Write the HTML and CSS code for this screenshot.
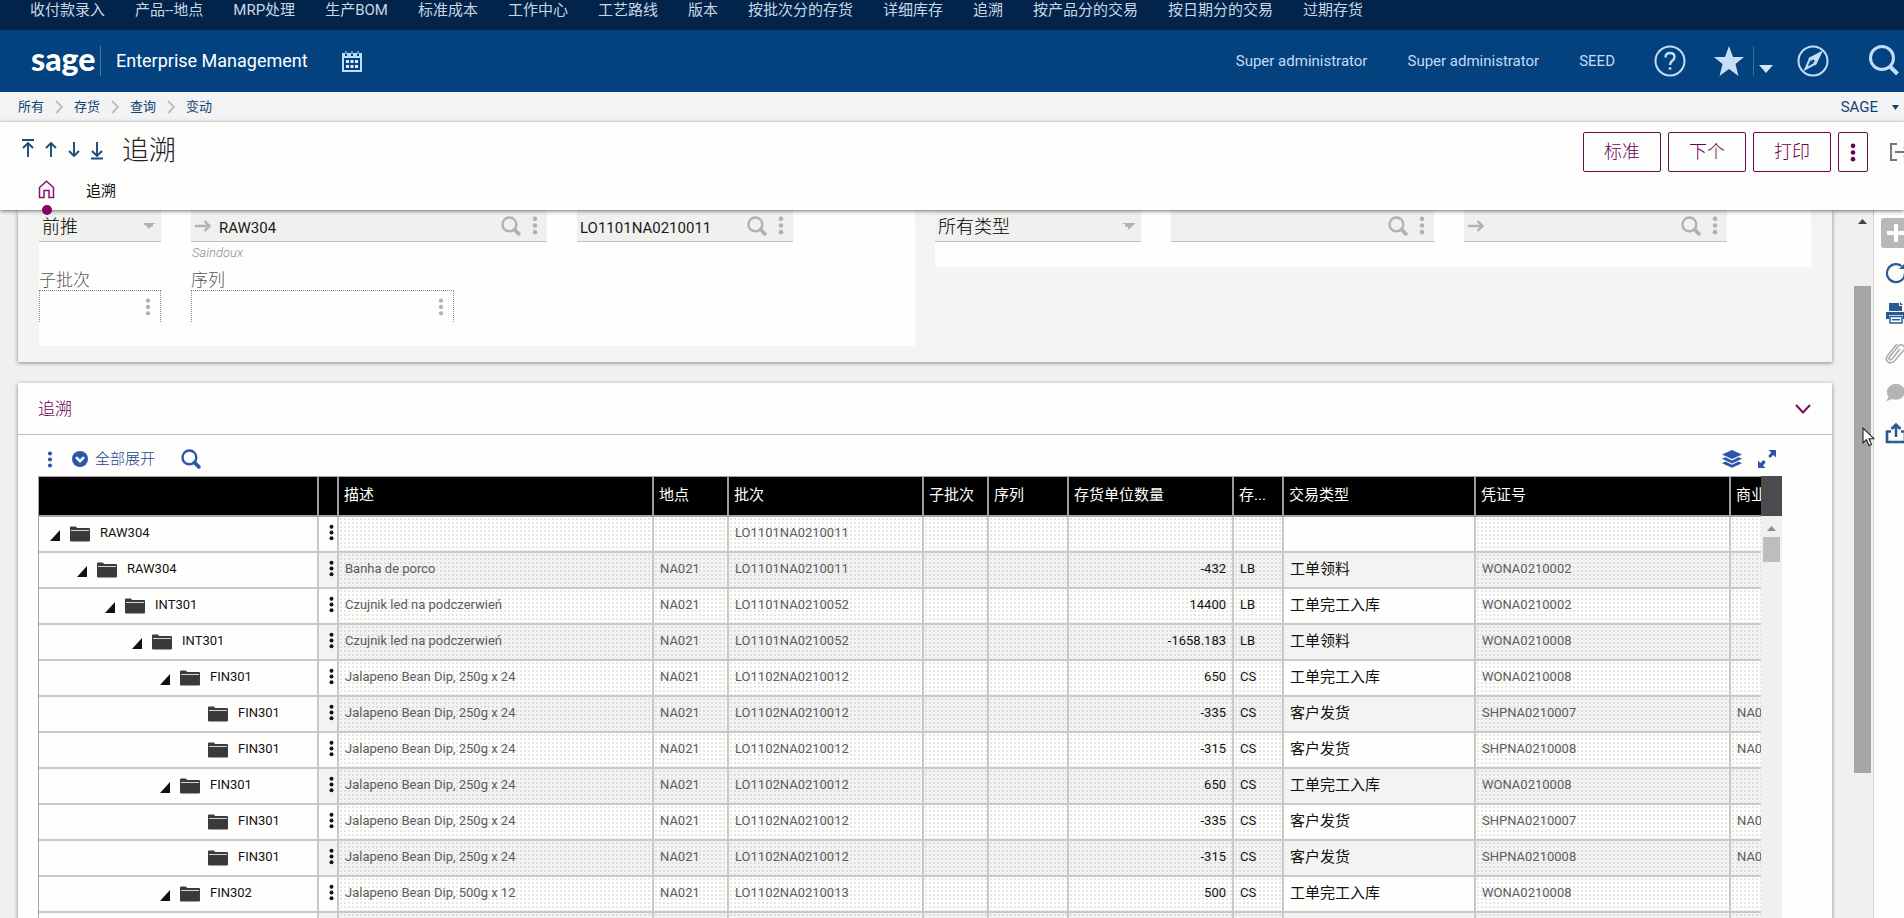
FILE: index.html
```html
<!DOCTYPE html>
<html lang="zh-CN">
<head>
<meta charset="utf-8">
<title>追溯 - Sage Enterprise Management</title>
<link rel="stylesheet" href="styles.css">
</head>
<body>
<svg class="sprite" aria-hidden="true">
  <symbol id="dots" viewBox="0 0 6 20"><circle cx="3" cy="3" r="2.4"/><circle cx="3" cy="10" r="2.4"/><circle cx="3" cy="17" r="2.4"/></symbol>
  <symbol id="lens" viewBox="0 0 20 20"><circle cx="8.4" cy="8.4" r="6.9" fill="none" stroke="currentColor" stroke-width="2.4"/><path d="M13.5 13.5 17.8 17.8" fill="none" stroke="currentColor" stroke-width="3.8" stroke-linecap="round"/></symbol>
  <symbol id="go" viewBox="0 0 18 12"><path d="M1 6H15M10.500 1 15.500 6 10.500 11" fill="none" stroke="currentColor" stroke-width="2.400"/></symbol>
  <symbol id="folder" viewBox="0 0 20 16"><path d="M0 14.500V1.500Q0 .5 1 .5H5.500Q6.500 .5 7 2H19Q20 2 20 3V14.500Q20 15.500 19 15.500H1Q0 15.500 0 14.500Z" fill="#3a3a3a"/><path d="M1 4.500H19" stroke="#d5d5d5" stroke-width="1"/></symbol>
  <symbol id="tri" viewBox="0 0 10 11"><path d="M10 0V11H0Z"/></symbol>
  <symbol id="sep" viewBox="0 0 8 14"><path d="M1 1 7 7 1 13" fill="none" stroke="currentColor" stroke-width="1.900"/></symbol>
</svg>
<nav class="shortcuts" aria-label="快捷方式">
  <a href="#">收付款录入</a><a href="#">产品--地点</a><a href="#">MRP处理</a><a href="#">生产BOM</a><a href="#">标准成本</a><a href="#">工作中心</a><a href="#">工艺路线</a><a href="#">版本</a><a href="#">按批次分的存货</a><a href="#">详细库存</a><a href="#">追溯</a><a href="#">按产品分的交易</a><a href="#">按日期分的交易</a><a href="#">过期存货</a>
</nav>
<header class="banner">
  <span class="logo">sage</span>
  <span class="product">Enterprise Management</span>
  <button class="plain calendar" aria-label="日历"><svg width="20" height="21" viewBox="0 0 20 21"><path d="M0 2H3V5H5V2H9V5H11V2H15V5H17V2H20V21H0ZM2 7V19H18V7Z" fill-rule="evenodd" fill="#bcdcff"/><path d="M4 0V3M10 0V3M16 0V3" stroke="#bcdcff" stroke-width="1.200"/><path d="M4 9h3v3H4zM8.500 9h3v3h-3zM13 9h3v3h-3zM4 14h3v3H4zM8.500 14h3v3h-3zM13 14h3v3h-3z" fill="#dcecff"/></svg></button>
  <span class="grow"></span>
  <a class="user" href="#">Super administrator</a>
  <a class="user" href="#">Super administrator</a>
  <a class="user endpoint" href="#">SEED</a>
  <button class="plain help" aria-label="帮助"><svg width="32" height="32" viewBox="0 0 32 32" fill="none" stroke="#c4dcf6" stroke-width="2"><circle cx="16" cy="16" r="14.500"/><path d="M11.500 12.500Q11.500 8 16 8Q20.500 8 20.500 12Q20.500 14 18 16Q16 17.600 16 20" stroke-width="2.400"/><path d="M14.700 22.300h2.600v2.400h-2.600z" fill="#c4dcf6" stroke="none"/></svg></button>
  <button class="plain star" aria-label="收藏"><svg width="30" height="30" viewBox="0 0 30 30"><path d="M15 0 19 11H30L21.500 18 24.500 30 15 23 5.500 30 8.500 18 0 11H11Z" fill="#c9ddf5"/></svg></button>
  <button class="plain more" aria-label="收藏列表"><svg width="14" height="8" viewBox="0 0 14 8"><path d="M0 0H14L7 8Z" fill="#d4e5f8"/></svg></button>
  <button class="plain compass" aria-label="导航"><svg width="32" height="32" viewBox="0 0 32 32" fill="none" stroke="#c4dcf6" stroke-width="2"><circle cx="16" cy="16" r="14.500"/><path d="M23.500 8 18.500 18.500 8.500 24 13 13.500Z" stroke-width="2"/><path d="M23.500 8 18.500 18.500 13 13.500Z" fill="#c4dcf6"/><circle cx="16" cy="16" r="1.500" fill="#03417f" stroke="none"/></svg></button>
  <button class="plain find" aria-label="搜索"><svg width="32" height="32" viewBox="0 0 32 32" fill="none" stroke="#c4dcf6"><circle cx="14" cy="13" r="11.500" stroke-width="3"/><path d="M22 21.500 29.500 29" stroke-width="4"/></svg></button>
</header>
<div class="trail">
  <nav aria-label="路径"><a href="#">所有</a><svg width="8" height="14"><use href="#sep"/></svg><a href="#">存货</a><svg width="8" height="14"><use href="#sep"/></svg><a href="#">查询</a><svg width="8" height="14"><use href="#sep"/></svg><a href="#">变动</a></nav>
  <button class="plain folder">SAGE<svg width="7" height="5" viewBox="0 0 7 5"><path d="M0 0H7L3.500 5Z"/></svg></button>
</div>
<section class="heading">
  <div class="titlebar">
    <div class="steps">
      <button class="plain" aria-label="第一条"><svg width="14" height="22" viewBox="0 0 14 22"><path d="M1 2H13M7 19V5M2 10 7 5 12 10"/></svg></button>
      <button class="plain" aria-label="上一条"><svg width="14" height="22" viewBox="0 0 14 22"><path d="M7 19V5M2 10 7 5 12 10"/></svg></button>
      <button class="plain" aria-label="下一条"><svg width="14" height="22" viewBox="0 0 14 22"><path d="M7 4V18M2 13 7 18 12 13"/></svg></button>
      <button class="plain" aria-label="最后一条"><svg width="14" height="22" viewBox="0 0 14 22"><path d="M1 20.500H13M7 4V18M2 13 7 18 12 13"/></svg></button>
    </div>
    <h1>追溯</h1>
    <div class="actions">
      <button>标准</button><button>下个</button><button>打印</button>
      <button class="narrow" aria-label="更多操作"><svg width="6" height="19"><use href="#dots"/></svg></button>
      <button class="plain exit" aria-label="退出"><svg width="22" height="18" viewBox="0 0 22 18" fill="none" stroke="#777" stroke-width="2"><path d="M7 1H1V17H7M5 9H19M14 4 19 9 14 14"/></svg></button>
    </div>
  </div>
  <nav class="tabs" aria-label="页签">
    <a class="home" href="#" aria-label="主页"><svg width="17" height="19" viewBox="0 0 17 19" fill="none" stroke="#8a1070" stroke-width="1.500"><path d="M1.500 17.500V7.500L8.500 1.200 15.500 7.500V17.500H11V10.500H6V17.500Z"/></svg></a>
    <a href="#">追溯</a>
  </nav>
</section>
<div class="workspace">
  <main>
    <section class="card criteria">
      <div class="panel left">
        <div class="line">
          <span class="field w-s"><select aria-label="方向"><option>前推</option></select></span>
          <div>
            <span class="field w-l"><svg width="18" height="12"><use href="#go"/></svg><input aria-label="产品" value="RAW304"><svg width="20" height="20"><use href="#lens"/></svg><svg width="6" height="19"><use href="#dots"/></svg></span>
            <em>Saindoux</em>
          </div>
          <span class="field w-m"><input aria-label="批次" value="LO1101NA0210011"><svg width="20" height="20"><use href="#lens"/></svg><svg width="6" height="19"><use href="#dots"/></svg></span>
        </div>
        <div class="line second">
          <div><label for="sublot">子批次</label><span class="field empty w-s"><input id="sublot"><svg width="6" height="18"><use href="#dots"/></svg></span></div>
          <div><label for="serial">序列</label><span class="field empty w-x"><input id="serial"><svg width="6" height="18"><use href="#dots"/></svg></span></div>
        </div>
      </div>
      <div class="panel right">
        <div class="line">
          <span class="field w-t"><select aria-label="类型"><option>所有类型</option></select></span>
          <span class="field w-x"><input aria-label="凭证号"><svg width="20" height="20"><use href="#lens"/></svg><svg width="6" height="19"><use href="#dots"/></svg></span>
          <span class="field w-x"><svg width="18" height="12"><use href="#go"/></svg><input aria-label="业务伙伴"><svg width="20" height="20"><use href="#lens"/></svg><svg width="6" height="19"><use href="#dots"/></svg></span>
        </div>
      </div>
    </section>
    <section class="card results">
      <header><h2>追溯</h2><button class="plain" aria-label="折叠"><svg width="16" height="10" viewBox="0 0 16 10"><path d="M1 1 8 8.500 15 1" fill="none" stroke="#7a0f62" stroke-width="2"/></svg></button></header>
      <div class="tools">
        <button class="plain" aria-label="更多"><svg width="6" height="17"><use href="#dots"/></svg></button>
        <button class="plain expand"><svg width="16" height="16" viewBox="0 0 16 16"><circle cx="8" cy="8" r="8"/><path d="M4 6.200 8 10.200 12 6.200" fill="none" stroke="#fff" stroke-width="2.400"/></svg>全部展开</button>
        <button class="plain" aria-label="查找"><svg width="20" height="20"><use href="#lens"/></svg></button>
        <span class="grow"></span>
        <button class="plain" aria-label="图层"><svg width="20" height="18" viewBox="0 0 20 18"><path d="M10 0 20 4.500 10 9 0 4.500ZM0 8.700 3.500 7.200 10 10.400 16.500 7.200 20 8.700 10 13.400ZM0 13.200 3.500 11.600 10 14.700 16.500 11.600 20 13.200 10 17.700Z"/></svg></button>
        <button class="plain full" aria-label="全屏"><svg width="18" height="18" viewBox="0 0 18 18"><path d="M10.500 0H18V7.500L15.500 5 12 8 10.300 6 13.200 2.600ZM7.500 18H0V10.500L2.500 13 5.500 10 7.800 12.300 5 15.500Z"/></svg></button>
      </div>
      <div class="grid">
        <div class="clip">
          <table>
            <colgroup><col class="c-tree"><col class="c-menu"><col class="c-desc"><col class="c-site"><col class="c-lot"><col class="c-sub"><col class="c-ser"><col class="c-qty"><col class="c-unit"><col class="c-type"><col class="c-doc"><col class="c-bp"></colgroup>
            <thead><tr><th></th><th></th><th>描述</th><th>地点</th><th>批次</th><th>子批次</th><th>序列</th><th>存货单位数量</th><th>存...</th><th>交易类型</th><th>凭证号</th><th class="cut">商业</th></tr></thead>
            <tbody>
              <tr><td class="l0"><svg width="10" height="11"><use href="#tri"/></svg><svg width="20" height="16"><use href="#folder"/></svg>RAW304</td><td><svg width="5" height="17"><use href="#dots"/></svg></td><td></td><td></td><td>LO1101NA0210011</td><td></td><td></td><td></td><td></td><td></td><td></td><td></td></tr>
              <tr><td class="l1"><svg width="10" height="11"><use href="#tri"/></svg><svg width="20" height="16"><use href="#folder"/></svg>RAW304</td><td><svg width="5" height="17"><use href="#dots"/></svg></td><td>Banha de porco</td><td>NA021</td><td>LO1101NA0210011</td><td></td><td></td><td>-432</td><td>LB</td><td>工单领料</td><td>WONA0210002</td><td></td></tr>
              <tr><td class="l2"><svg width="10" height="11"><use href="#tri"/></svg><svg width="20" height="16"><use href="#folder"/></svg>INT301</td><td><svg width="5" height="17"><use href="#dots"/></svg></td><td>Czujnik led na podczerwień</td><td>NA021</td><td>LO1101NA0210052</td><td></td><td></td><td>14400</td><td>LB</td><td>工单完工入库</td><td>WONA0210002</td><td></td></tr>
              <tr><td class="l3"><svg width="10" height="11"><use href="#tri"/></svg><svg width="20" height="16"><use href="#folder"/></svg>INT301</td><td><svg width="5" height="17"><use href="#dots"/></svg></td><td>Czujnik led na podczerwień</td><td>NA021</td><td>LO1101NA0210052</td><td></td><td></td><td>-1658.183</td><td>LB</td><td>工单领料</td><td>WONA0210008</td><td></td></tr>
              <tr><td class="l4"><svg width="10" height="11"><use href="#tri"/></svg><svg width="20" height="16"><use href="#folder"/></svg>FIN301</td><td><svg width="5" height="17"><use href="#dots"/></svg></td><td>Jalapeno Bean Dip, 250g x 24</td><td>NA021</td><td>LO1102NA0210012</td><td></td><td></td><td>650</td><td>CS</td><td>工单完工入库</td><td>WONA0210008</td><td></td></tr>
              <tr><td class="l5"><svg width="20" height="16"><use href="#folder"/></svg>FIN301</td><td><svg width="5" height="17"><use href="#dots"/></svg></td><td>Jalapeno Bean Dip, 250g x 24</td><td>NA021</td><td>LO1102NA0210012</td><td></td><td></td><td>-335</td><td>CS</td><td>客户发货</td><td>SHPNA0210007</td><td class="cut">NA021</td></tr>
              <tr><td class="l5"><svg width="20" height="16"><use href="#folder"/></svg>FIN301</td><td><svg width="5" height="17"><use href="#dots"/></svg></td><td>Jalapeno Bean Dip, 250g x 24</td><td>NA021</td><td>LO1102NA0210012</td><td></td><td></td><td>-315</td><td>CS</td><td>客户发货</td><td>SHPNA0210008</td><td class="cut">NA021</td></tr>
              <tr><td class="l4"><svg width="10" height="11"><use href="#tri"/></svg><svg width="20" height="16"><use href="#folder"/></svg>FIN301</td><td><svg width="5" height="17"><use href="#dots"/></svg></td><td>Jalapeno Bean Dip, 250g x 24</td><td>NA021</td><td>LO1102NA0210012</td><td></td><td></td><td>650</td><td>CS</td><td>工单完工入库</td><td>WONA0210008</td><td></td></tr>
              <tr><td class="l5"><svg width="20" height="16"><use href="#folder"/></svg>FIN301</td><td><svg width="5" height="17"><use href="#dots"/></svg></td><td>Jalapeno Bean Dip, 250g x 24</td><td>NA021</td><td>LO1102NA0210012</td><td></td><td></td><td>-335</td><td>CS</td><td>客户发货</td><td>SHPNA0210007</td><td class="cut">NA021</td></tr>
              <tr><td class="l5"><svg width="20" height="16"><use href="#folder"/></svg>FIN301</td><td><svg width="5" height="17"><use href="#dots"/></svg></td><td>Jalapeno Bean Dip, 250g x 24</td><td>NA021</td><td>LO1102NA0210012</td><td></td><td></td><td>-315</td><td>CS</td><td>客户发货</td><td>SHPNA0210008</td><td class="cut">NA021</td></tr>
              <tr><td class="l4"><svg width="10" height="11"><use href="#tri"/></svg><svg width="20" height="16"><use href="#folder"/></svg>FIN302</td><td><svg width="5" height="17"><use href="#dots"/></svg></td><td>Jalapeno Bean Dip, 500g x 12</td><td>NA021</td><td>LO1102NA0210013</td><td></td><td></td><td>500</td><td>CS</td><td>工单完工入库</td><td>WONA0210008</td><td></td></tr>
              <tr><td></td><td></td><td></td><td></td><td></td><td></td><td></td><td></td><td></td><td></td><td></td><td></td></tr>
            </tbody>
          </table>
        </div>
        <div class="gridbar"><div class="corner"></div><svg width="9" height="5" viewBox="0 0 9 5"><path d="M0 5H9L4.500 0Z" fill="#8f8f8f"/></svg><div class="thumb"></div></div>
      </div>
    </section>
  </main>
  <div class="pagebar"><svg width="9" height="5" viewBox="0 0 9 5"><path d="M0 5H9L4.500 0Z" fill="#444"/></svg><div class="thumb"></div>
    <svg class="pointer" width="13" height="20" viewBox="0 0 13 20"><path d="M1 1V16L4.500 12.700 7 18.500 9.500 17.400 7 11.700H12Z" fill="#fff" stroke="#222" stroke-width="1.100"/></svg>
  </div>
  <aside class="rail">
    <button class="plain add" aria-label="新建"><svg width="30" height="30" viewBox="0 0 30 30"><path d="M15 6V24M6 15H24" stroke="#fff" stroke-width="4"/></svg></button>
    <button class="plain" aria-label="刷新"><svg width="22" height="22" viewBox="0 0 22 22"><path d="M16.500 4A9 9 0 1 0 20 11" fill="none" stroke="#2a5a92" stroke-width="2.200"/><path d="M14 7H21V0Z" fill="#2a5a92"/></svg></button>
    <button class="plain" aria-label="打印"><svg width="22" height="22" viewBox="0 0 22 22" fill="#2a5a92"><path d="M4 1H14V4H17V9H4ZM15 0 18 3H15ZM1 10H21V17H18V13H4V17H1Z"/><path d="M5 14.500H17V21H5Z" fill="#fff" stroke="#2a5a92" stroke-width="1.500"/><path d="M7 17.700H15" stroke="#2a5a92" stroke-width="1.500"/></svg></button>
    <button class="plain" aria-label="附件"><svg width="22" height="22" viewBox="0 0 22 22"><path d="M15 7 7 17Q5.500 18.500 4.500 17.500T4.500 15L13.500 4Q16 1.500 18.500 4T18.500 8.500L9.500 19Q5 22.500 2.500 19.500T3 13L12 2" fill="none" stroke="#aaa" stroke-width="1.500"/></svg></button>
    <button class="plain" aria-label="评论"><svg width="22" height="22" viewBox="0 0 22 22"><path d="M2 11A9 8 0 1 1 7 17L1 19.500 3.500 15Q2 13 2 11Z" fill="#b4b4b4"/></svg></button>
    <button class="plain" aria-label="导出"><svg width="22" height="22" viewBox="0 0 22 22" fill="none" stroke="#2a5a92" stroke-width="2.600"><path d="M6 9.500H2V20H20V9.500H16M11 15V3M6.500 7 11 2.500 15.500 7"/></svg></button>
  </aside>
</div>
</body>
</html>
```

FILE: styles.css
```css
* { box-sizing: border-box; }
body {
  margin: 0;
  height: 100vh;
  overflow: hidden;
  display: flex;
  flex-direction: column;
  background: #fdfdfc;
  color: #111;
  font: 15px/20px "Roboto", "Noto Sans CJK SC", sans-serif;
}
.sprite { position: absolute; width: 0; height: 0; }
svg { display: block; flex: none; }
use { fill: currentColor; }
a { color: inherit; text-decoration: none; }
button, input, select { font: inherit; color: inherit; margin: 0; }
.plain { border: 0; background: none; padding: 0; }
.grow { flex: 1; }
h1, h2 { margin: 0; font-weight: 300; }

.shortcuts {
  flex: none;
  display: flex;
  gap: 30px;
  height: 30px;
  padding: 0 30px;
  background: #03244a;
  color: #c9d6e3;
  white-space: nowrap;
}

.banner {
  flex: none;
  display: flex;
  align-items: center;
  height: 62px;
  padding-left: 31px;
  background: #03417f;
  color: #c4dcf6;
  overflow: hidden;
}
.logo {
  width: 70px;
  height: 30px;
  border-right: 1px solid #4d79a8;
  color: #fff;
  font: 900 32px/26px "Lato", sans-serif;
}
.product {
  margin: 0 34px 0 15px;
  color: #fff;
  font-size: 18px;
}
.user { margin-right: 40px; }
.endpoint { margin-right: 39px; }
.help { margin-right: 28px; }
.star { padding-right: 9px; border-right: 1px solid #3f6c9f; }
.more { padding: 16px 0 0 5px; margin-right: 24px; }
.compass { margin-right: 39px; }
.find { margin-right: 4px; }

.trail {
  flex: none;
  display: flex;
  justify-content: space-between;
  height: 30px;
  padding: 0 5px 0 18px;
  background: #f1f3f5;
  color: #164270;
  font-size: 13px;
}
.trail nav { display: flex; align-items: center; gap: 11px; }
.trail svg { color: #b9bec3; }
.trail .folder { display: flex; align-items: center; gap: 14px; font-size: 15px; }
.trail .folder svg { color: #164270; fill: currentColor; }

.heading {
  flex: none;
  position: relative;
  z-index: 2;
  height: 88px;
  background: #fdfdfc;
  box-shadow: 0 1px 4px rgba(0, 0, 0, .55);
}
.titlebar { display: flex; height: 58px; padding-left: 21px; overflow: hidden; }
.steps { display: flex; gap: 9px; padding-top: 16px; align-items: flex-start; }
.steps path { fill: none; stroke: #1d4a78; stroke-width: 1.9; }
h1 { margin: 9px auto 0 18px; font-size: 27px; line-height: 40px; color: #222; }
.actions { display: flex; gap: 7px; padding-top: 10px; }
.actions button:not(.plain) {
  width: 78px;
  height: 40px;
  border: 1px solid #6a0a54;
  border-radius: 2px;
  background: none;
  color: #6a0052;
  font-size: 18px;
  font-weight: 300;
}
.actions .narrow:not(.plain) { width: 30px; display: flex; align-items: center; justify-content: center; padding: 0; }
.exit { width: 14px; height: 40px; margin-left: 15px; overflow: hidden; }
.tabs { display: flex; gap: 31px; padding-left: 38px; color: #111; line-height: 22px; }
.home { position: relative; }
.home::after {
  content: "";
  position: absolute;
  left: 4px;
  top: 25px;
  width: 10px;
  height: 10px;
  border-radius: 50%;
  background: #850062;
}

.workspace { flex: 1; min-height: 0; display: flex; }
main { flex: 1; min-width: 0; padding: 0 22px 0 18px; background: #eff0ef; overflow: hidden; }
.card { box-shadow: 0 1px 4px rgba(0, 0, 0, .45); }
.criteria {
  display: flex;
  align-items: flex-start;
  gap: 20px;
  padding: 0 21px 16px;
  background: #f4f4f3;
}
.panel { flex: 1; background: #fefefd; }
.left { height: 136px; }
.right { height: 57px; }
.line { display: flex; gap: 30px; align-items: flex-start; }
.field {
  display: flex;
  align-items: center;
  gap: 11px;
  height: 32px;
  padding: 0 9px 0 3px;
  border-bottom: 1px solid #c0c0c0;
  background: #f0f0ef;
  color: #b2b2b2;
}
.field svg + input { margin-left: -4px; }
.field input {
  flex: 1;
  min-width: 0;
  border: 0;
  padding: 4px 0 0;
  background: none;
  color: #1a1a1a;
}
.field use { color: #b2b2b2; }
.field select {
  flex: 1;
  align-self: stretch;
  padding: 3px 0 0;
  border: 0;
  appearance: none;
  background: linear-gradient(to bottom right, #b2b2b2 50%, transparent 50%) no-repeat right 0 top 13px / 6px 6px,
              linear-gradient(to bottom left, #b2b2b2 50%, transparent 50%) no-repeat right 6px top 13px / 6px 6px;
  color: #000;
  font-size: 18px;
  font-weight: 300;
}
.field:has(select) { padding-right: 6px; }
.w-s { width: 122px; }
.w-m { width: 216px; }
.w-l { width: 356px; }
.w-t { width: 206px; }
.w-x { width: 263px; }
.line em { display: block; padding-left: 1px; color: #8c8c8c; font-size: 13px; font-weight: 300; line-height: 21px; }
.second { margin-top: 6px; }
.second label { display: block; height: 21px; color: #555; font-size: 17px; font-weight: 300; line-height: 23px; }
.empty { border: 1px dotted #8c8c8c; border-bottom: 0; background: none; }

.results { margin-top: 21px; background: #fefefd; }
.results header {
  display: flex;
  align-items: center;
  justify-content: space-between;
  height: 52px;
  padding: 0 21px 0 20px;
  border-bottom: 1px solid #cbb0c7;
}
h2 { font-size: 17px; line-height: 24px; color: #6a0052; }
.tools {
  display: flex;
  align-items: center;
  height: 41px;
  padding: 7px 56px 0 29px;
  color: #2f55a8;
}
.tools svg { fill: currentColor; }
.expand { display: flex; align-items: center; gap: 7px; margin: 0 26px 0 19px; font-weight: 300; color: #1d4488; }
.expand svg { color: #2f55a8; }
.full { margin-left: 16px; }

.grid { display: flex; margin: 0 50px 0 20px; }
.clip { flex: 1; min-width: 0; overflow: hidden; border: 1px solid #a5a5a5; border-right: 0; }
table { width: 1723px; table-layout: fixed; border-collapse: separate; border-spacing: 0; }
.c-tree { width: 280px; }
.c-menu { width: 20px; }
.c-desc { width: 315px; }
.c-site { width: 75px; }
.c-lot { width: 195px; }
.c-sub { width: 65px; }
.c-ser { width: 80px; }
.c-qty { width: 165px; }
.c-unit { width: 50px; }
.c-type { width: 192px; }
.c-doc { width: 255px; }
.c-bp { width: 31px; }
th {
  height: 40px;
  padding: 0 6px 3px 5px;
  border-right: 2px solid #9c9c9c;
  border-bottom: 2px solid #a5a5a5;
  background: #000;
  color: #fff;
  font-weight: 400;
  text-align: left;
  white-space: nowrap;
  overflow: hidden;
}
td {
  height: 36px;
  padding: 0 6px 2px;
  border-right: 2px solid #c8c8c8;
  border-bottom: 2px solid #c8c8c8;
  background: radial-gradient(circle, #e6e6e5 1px, transparent 1px) 0 0 / 4px 4px;
  color: #5c5c5c;
  font-size: 13px;
  white-space: nowrap;
  overflow: hidden;
}
th:last-child, td:last-child { border-right: 0; }
.cut { padding-right: 0; }
tbody tr:nth-child(even) { background: #f3f3f3; }
tbody tr:nth-child(even) td { background-image: radial-gradient(circle, #dedede 1px, transparent 1px); }
tbody tr td:nth-child(1), tbody tr td:nth-child(2), tbody tr td:nth-child(10) { background-image: none; color: #111; }
tbody td:first-child { background-color: #fefefd; }
tbody tr:nth-child(even) td:first-child, tbody tr:nth-child(even) td:nth-child(2), tbody tr:nth-child(even) td:nth-child(10) { background-image: none; }
td:nth-child(1) svg { display: inline-block; vertical-align: middle; margin-right: 10px; }
td:nth-child(1) svg:first-child:not([width="20"]) { margin-top: 4px; }
td:nth-child(2) { padding: 0 0 4px 10px; }
td:nth-child(8) { color: #111; text-align: right; }
td:nth-child(9) { color: #111; }
td:nth-child(10) { font-size: 15px; }
td.l0 { padding-left: 11px; }
td.l1 { padding-left: 38px; }
td.l2 { padding-left: 66px; }
td.l3 { padding-left: 93px; }
td.l4 { padding-left: 121px; }
td.l5 { padding-left: 169px; }
.gridbar { width: 21px; background: #f0f0f0; display: flex; flex-direction: column; align-items: center; }
.corner { width: 21px; height: 40px; margin-bottom: 10px; background: #4a4b4e; }
.gridbar .thumb { width: 17px; height: 25px; margin-top: 6px; background: #bdbdbd; }

.pagebar { position: relative; width: 19px; background: #eff0ef; padding: 9px 2px 0 0; }
.pagebar > svg:first-child { margin: 0 auto; }
.pagebar .thumb { height: 487px; margin-top: 62px; background: #a6a6a5; }
.pointer { position: absolute; left: 8px; top: 217px; }

.rail {
  width: 31px;
  padding: 8px 0 0 7px;
  border-left: 1px solid #d0d0d0;
  display: flex;
  flex-direction: column;
  gap: 10px;
  overflow: hidden;
}
.rail button { flex: none; width: 30px; height: 30px; padding-left: 4px; }
.rail .add { padding: 0; border-radius: 3px; background: #b8b8b8; }
```
